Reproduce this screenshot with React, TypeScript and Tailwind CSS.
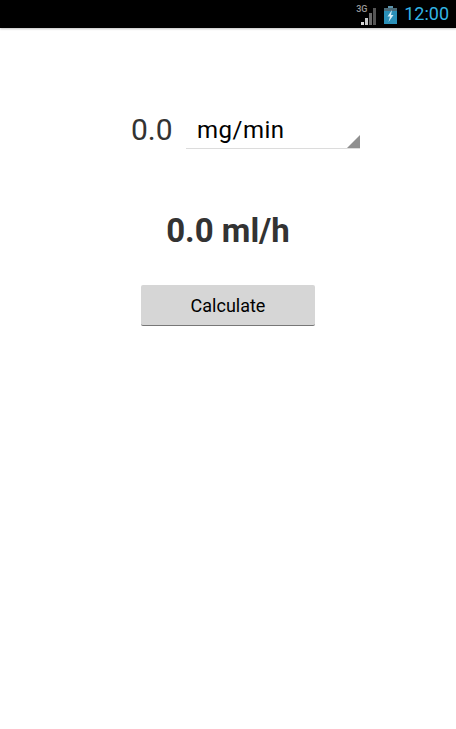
export default function App() {
  return (
    <div className="w-[456px] h-[729px] bg-white flex flex-col overflow-hidden font-['Roboto',sans-serif]">
      {/* status bar */}
      <div className="h-[28px] bg-black flex items-center justify-end pr-[7px] shadow-[0_1px_2px_rgba(0,0,0,0.25)] shrink-0">
        <div className="relative w-[22px] h-[24px] mr-[7px]">
          <span className="absolute left-[1px] top-[3px] text-[9px] leading-[9px] font-medium text-[#9a9a9a]">3G</span>
          <svg className="absolute left-0 top-0" width="22" height="24" viewBox="0 0 22 24">
            <path d="M6 23h3v-3H6z" fill="#d8d8d8" />
            <path d="M10 23h3v-7h-3z" fill="#c8c8c8" />
            <path d="M14 23h3V11h-3z" fill="#6a6a6a" />
            <path d="M18 23h3V6h-3z" fill="#555" />
          </svg>
        </div>
        <svg className="mr-[7px] mt-[2px]" width="13" height="18" viewBox="0 0 13 18">
          <path d="M4 0h5v2H4z" fill="#5b93ab" />
          <path d="M0 2h13v16H0z" fill="#2b90b8" />
          <path d="M0 2h13v3H0z" fill="#4a6a78" />
          <path d="M8 4L3.5 10.5h2.5L4.5 16 9.5 9H7z" fill="#d5eef8" />
        </svg>
        <span className="text-[18px] leading-[28px] text-[#33b5e5]">12:00</span>
      </div>

      <div className="flex flex-col items-center">
        {/* input row */}
        <div className="mt-[83px] flex items-end h-[38px] ml-[36px]">
          <span className="w-[54px] pt-[2px] -ml-[1px] mr-[1px] text-[30px] leading-[38px] font-normal text-[#333]">0.0</span>
          <div className="relative w-[174px] h-[38px] border-b border-[#dcdcdc] pl-[11px]">
            <span className="text-[24px] leading-[38px] tracking-[0.5px] text-black">mg/min</span>
            <div className="absolute right-0 bottom-0 w-0 h-0 border-l-[13px] border-t-[13px] border-l-transparent border-t-transparent border-b-[13px] border-b-[#8f8f8f]" />
          </div>
        </div>

        {/* result */}
        <div className="mt-[60px] text-[33px] leading-[44px] font-bold text-[#333]">0.0 ml/h</div>

        {/* button */}
        <button className="mt-[32px] w-[174px] h-[41px] bg-[#d6d6d6] border-b border-[#777] rounded-[2px] text-[18px] text-black">
          Calculate
        </button>
      </div>
    </div>
  );
}
